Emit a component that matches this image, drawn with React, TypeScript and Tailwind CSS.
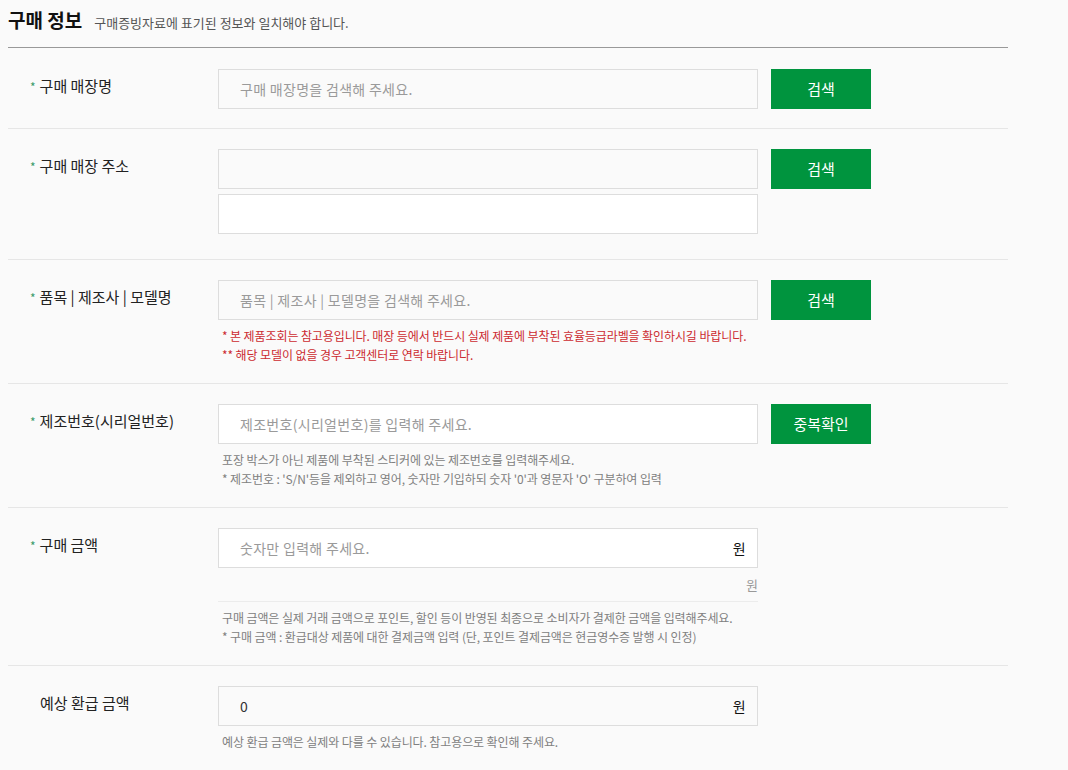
const font = { fontFamily: '"Noto Sans CJK KR", "Noto Sans", sans-serif' };

function Label({ text, required = true }: { text: string; required?: boolean }) {
  return (
    <div className={`w-[210px] shrink-0 pt-[7px] text-[15px] leading-5 text-[#222] ${required ? 'pl-[22px]' : 'pl-[32px]'}`}>
      {required && <span className="mr-[4px] text-[12px] text-[#3a9a6a]">*</span>}
      {text}
    </div>
  );
}

function Field({
  placeholder,
  value,
  white = false,
  unit,
}: {
  placeholder?: string;
  value?: string;
  white?: boolean;
  unit?: string;
}) {
  return (
    <div
      className={`flex h-[40px] w-[540px] items-center border border-[#dddddd] pl-[21px] pr-[11px] text-[14px] tracking-[0.3px] ${
        white ? 'bg-white' : 'bg-[#fafafa]'
      }`}
    >
      <span className={`flex-1 ${value ? 'text-[#333]' : 'text-[#9a9a9a]'}`}>{value ?? placeholder}</span>
      {unit && <span className="text-[14px] text-[#111]">{unit}</span>}
    </div>
  );
}

function GreenButton({ text }: { text: string }) {
  return (
    <button className="ml-[13px] flex h-[40px] w-[100px] items-center justify-center bg-[#00943e] text-[15px] text-white">
      {text}
    </button>
  );
}

function Notes({ lines, red = false }: { lines: string[]; red?: boolean }) {
  return (
    <div className={`mt-[6px] pl-[4px] text-[12px] leading-[19px] tracking-[-0.1px] ${red ? 'text-[#cc2a30]' : 'text-[#808080]'}`}>
      {lines.map((l) => (
        <div key={l}>{l}</div>
      ))}
    </div>
  );
}

export default function App() {
  return (
    <div className="min-h-screen bg-[#fafafa]" style={font}>
      <div className="ml-[8px] w-[1000px]">
        <div className="flex h-[48px] items-baseline gap-[12px] border-b border-[#999] pt-[6px]">
          <h2 className="text-[19px] font-bold text-[#111]">구매 정보</h2>
          <span className="text-[13px] text-[#555]">구매증빙자료에 표기된 정보와 일치해야 합니다.</span>
        </div>

        <div className="flex border-b border-[#e6e6e6] pb-[19px] pt-[21px]">
          <Label text="구매 매장명" />
          <Field placeholder="구매 매장명을 검색해 주세요." />
          <GreenButton text="검색" />
        </div>

        <div className="flex border-b border-[#e6e6e6] pb-[25px] pt-[20px]">
          <Label text="구매 매장 주소" />
          <div className="flex flex-col gap-[5px]">
            <Field />
            <Field white />
          </div>
          <div className="self-start">
            <GreenButton text="검색" />
          </div>
        </div>

        <div className="flex border-b border-[#e6e6e6] pb-[19px] pt-[20px]">
          <Label text="품목 | 제조사 | 모델명" />
          <div>
            <Field placeholder="품목 | 제조사 | 모델명을 검색해 주세요." />
            <Notes
              red
              lines={[
                '* 본 제품조회는 참고용입니다. 매장 등에서 반드시 실제 제품에 부착된 효율등급라벨을 확인하시길 바랍니다.',
                '** 해당 모델이 없을 경우 고객센터로 연락 바랍니다.',
              ]}
            />
          </div>
          <div className="self-start">
            <GreenButton text="검색" />
          </div>
        </div>

        <div className="flex border-b border-[#e6e6e6] pb-[19px] pt-[20px]">
          <Label text="제조번호(시리얼번호)" />
          <div>
            <Field white placeholder="제조번호(시리얼번호)를 입력해 주세요." />
            <Notes
              lines={[
                '포장 박스가 아닌 제품에 부착된 스티커에 있는 제조번호를 입력해주세요.',
                "* 제조번호 : 'S/N'등을 제외하고 영어, 숫자만 기입하되 숫자 '0'과 영문자 'O' 구분하여 입력",
              ]}
            />
          </div>
          <div className="self-start">
            <GreenButton text="중복확인" />
          </div>
        </div>

        <div className="flex border-b border-[#e6e6e6] pb-[19px] pt-[20px]">
          <Label text="구매 금액" />
          <div className="w-[540px]">
            <Field white placeholder="숫자만 입력해 주세요." unit="원" />
            <div className="mt-[8px] border-b border-[#ececec] pb-[7px] text-right text-[13px] leading-[18px] text-[#999]">
              원
            </div>
            <Notes
              lines={[
                '구매 금액은 실제 거래 금액으로 포인트, 할인 등이 반영된 최종으로 소비자가 결제한 금액을 입력해주세요.',
                '* 구매 금액 : 환급대상 제품에 대한 결제금액 입력 (단, 포인트 결제금액은 현금영수증 발행 시 인정)',
              ]}
            />
          </div>
        </div>

        <div className="flex pb-[19px] pt-[20px]">
          <Label text="예상 환급 금액" required={false} />
          <div>
            <Field value="0" unit="원" />
            <Notes lines={['예상 환급 금액은 실제와 다를 수 있습니다. 참고용으로 확인해 주세요.']} />
          </div>
        </div>
      </div>
    </div>
  );
}
